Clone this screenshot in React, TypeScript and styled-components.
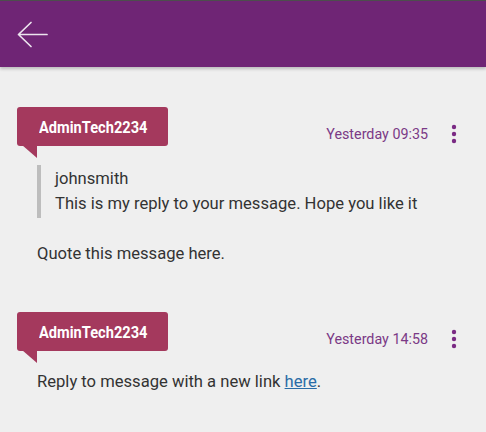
import React from "react";
import styled, { createGlobalStyle } from "styled-components";

const Global = createGlobalStyle`
  html, body { margin: 0; padding: 0; background: #efefef; }
  body { font-family: Roboto, "Noto Sans", "Liberation Sans", sans-serif; color: #333; }
  * { box-sizing: border-box; }
`;

const Screen = styled.div`
  width: 486px;
  min-height: 432px;
  background: #efefef;
  overflow: hidden;
`;

const TopBar = styled.header`
  height: 67px;
  background: #6f2575;
  border-top: 1px solid #4d4d4d;
  box-shadow: 0 2px 3px rgba(0, 0, 0, 0.22);
  display: flex;
  align-items: center;
  padding-left: 16px;
  position: relative;
  z-index: 1;
`;

const BackButton = styled.button`
  width: 34px;
  height: 34px;
  padding: 0;
  border: none;
  background: transparent;
  display: flex;
  align-items: center;
  justify-content: center;
`;

const Feed = styled.main`
  display: flex;
  flex-direction: column;
  padding-top: 40px;
  gap: 46px;
`;

const Message = styled.section`
  display: flex;
  flex-direction: column;
  padding: 0 20px 0 17px;
`;

const MessageHead = styled.div`
  display: flex;
  align-items: flex-end;
  justify-content: space-between;
`;

const Badge = styled.div`
  position: relative;
  width: 151px;
  height: 39px;
  background: #a4395d;
  border-radius: 3px;
  display: flex;
  align-items: center;
  padding-left: 22px;
  &::after {
    content: "";
    position: absolute;
    left: 5px;
    top: 38px;
    width: 0;
    height: 0;
    border-top: 13px solid #a4395d;
    border-left: 15px solid transparent;
  }
`;

const BadgeName = styled.span`
  display: inline-block;
  font-family: Roboto, "Liberation Sans", sans-serif;
  font-weight: 700;
  font-size: 17px;
  color: #fff;
  transform: scaleX(0.86);
  transform-origin: left center;
  white-space: nowrap;
  margin-top: 1px;
`;

const Meta = styled.div`
  display: flex;
  align-items: center;
  gap: 14px;
`;

const Time = styled.span`
  font-size: 14.3px;
  color: #7b3a86;
  line-height: 20px;
`;

const MenuButton = styled.button`
  width: 24px;
  height: 24px;
  padding: 0;
  border: none;
  background: transparent;
  display: flex;
  align-items: center;
  justify-content: center;
`;

const Body = styled.div<{ $gap: number }>`
  display: flex;
  flex-direction: column;
  margin-top: ${(p) => p.$gap}px;
  padding-left: 20px;
`;

const Quote = styled.blockquote`
  margin: 0 0 23px 0;
  padding: 1px 0 2px 14px;
  border-left: 4px solid #bdbdbd;
  font-size: 16.6px;
  line-height: 25px;
  color: #333;
`;

const Text = styled.p`
  margin: 0;
  font-size: 16.6px;
  line-height: 25px;
  color: #333;
`;

const Link = styled.a`
  color: #2b6ca6;
  text-decoration: underline;
`;

const BackArrow = () => (
  <svg width="34" height="34" viewBox="0 0 34 34" fill="none">
    <path
      d="M2.5 17.5 H31 M15 5.5 L2.5 17.5 L15 29.5"
      stroke="#ece4ee"
      strokeWidth="1.7"
      strokeLinecap="round"
      strokeLinejoin="round"
    />
  </svg>
);

const Kebab = () => (
  <svg width="24" height="24" viewBox="0 0 24 24">
    <circle cx="12" cy="5" r="2.2" fill="#7a2a84" />
    <circle cx="12" cy="12" r="2.2" fill="#7a2a84" />
    <circle cx="12" cy="19" r="2.2" fill="#7a2a84" />
  </svg>
);

type Msg = {
  author: string;
  time: string;
  gap: number;
  content: React.ReactNode;
};

const messages: Msg[] = [
  {
    author: "AdminTech2234",
    time: "Yesterday 09:35",
    gap: 19,
    content: (
      <>
        <Quote>
          <div>johnsmith</div>
          <div>This is my reply to your message. Hope you like it</div>
        </Quote>
        <Text>Quote this message here.</Text>
      </>
    ),
  },
  {
    author: "AdminTech2234",
    time: "Yesterday 14:58",
    gap: 18,
    content: (
      <Text>
        Reply to message with a new link <Link href="#">here</Link>.
      </Text>
    ),
  },
];

export default function App() {
  return (
    <Screen>
      <Global />
      <TopBar>
        <BackButton aria-label="Back">
          <BackArrow />
        </BackButton>
      </TopBar>
      <Feed>
        {messages.map((m, i) => (
          <Message key={i}>
            <MessageHead>
              <Badge>
                <BadgeName>{m.author}</BadgeName>
              </Badge>
              <Meta>
                <Time>{m.time}</Time>
                <MenuButton aria-label="More">
                  <Kebab />
                </MenuButton>
              </Meta>
            </MessageHead>
            <Body $gap={m.gap}>{m.content}</Body>
          </Message>
        ))}
      </Feed>
    </Screen>
  );
}
